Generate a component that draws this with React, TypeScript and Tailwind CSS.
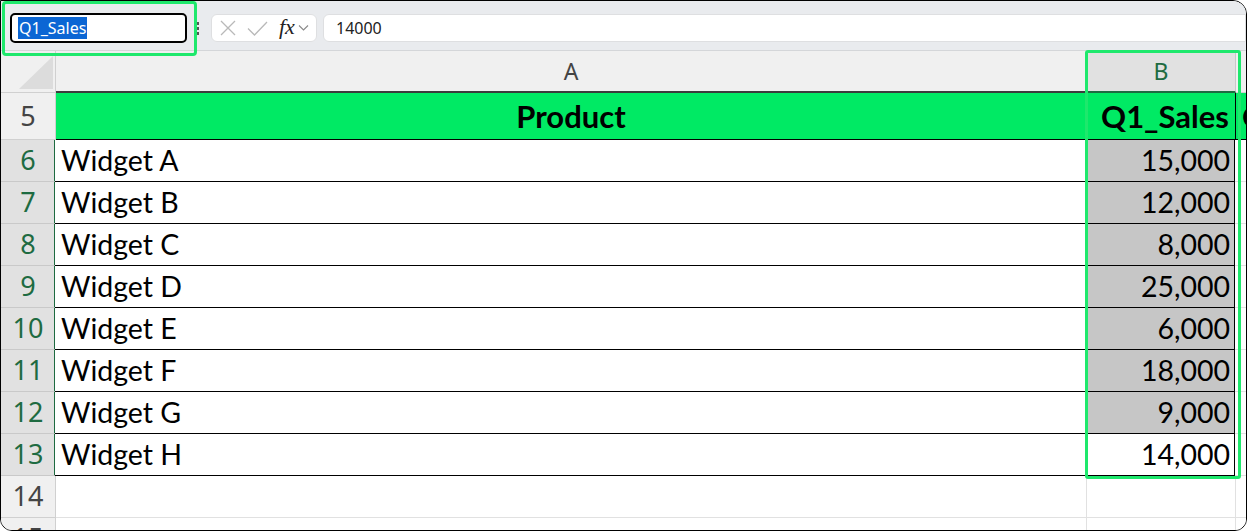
import React from "react";

const rows = [
  { n: 6, name: "Widget A", v: "15,000" },
  { n: 7, name: "Widget B", v: "12,000" },
  { n: 8, name: "Widget C", v: "8,000" },
  { n: 9, name: "Widget D", v: "25,000" },
  { n: 10, name: "Widget E", v: "6,000" },
  { n: 11, name: "Widget F", v: "18,000" },
  { n: 12, name: "Widget G", v: "9,000" },
  { n: 13, name: "Widget H", v: "14,000" },
];

const cellFont = "font-['Lato','Open_Sans',sans-serif]";
const uiFont = "font-['Noto_Sans','Open_Sans',sans-serif]";

export default function App() {
  return (
    <div className="w-[1247px] h-[531px] bg-white overflow-hidden">
      <div className="relative w-[1247px] h-[531px] overflow-hidden border border-black rounded-tr-[14px] rounded-b-[12px] bg-white">
        {/* Formula bar */}
        <div className={`h-[50px] bg-[#e9ebee] border-b border-[#d4d6d9] flex items-start pt-[12px] ${uiFont}`}>
          <div className="ml-[9px] w-[177px] h-[30px] rounded-[5px] border-2 border-black bg-white flex items-center pl-[6px]">
            <span className="bg-[#0b66d4] text-white text-[16px] leading-[22px] px-[1px]">Q1_Sales</span>
          </div>
          <div className="ml-[9px] mt-[9px] flex flex-col gap-[2px] w-[4px]">
            <span className="w-[3px] h-[3px] bg-[#555]" />
            <span className="w-[3px] h-[3px] bg-[#555]" />
            <span className="w-[3px] h-[3px] bg-[#555]" />
          </div>
          <div className="ml-[11px] mt-[1px] w-[106px] h-[28px] rounded-[6px] bg-white border border-[#dedfe1] flex items-center pl-[8px]">
            <svg width="16" height="16" viewBox="0 0 16 16" className="mr-[11px]">
              <path d="M1 1 L15 15 M15 1 L1 15" stroke="#b9b9b9" strokeWidth="1.3" fill="none" />
            </svg>
            <svg width="21" height="15" viewBox="0 0 21 15" className="mr-[11px]">
              <path d="M1 7.5 L7.5 14 L20 1" stroke="#b9b9b9" strokeWidth="1.3" fill="none" />
            </svg>
            <span className="font-['Liberation_Serif',serif] italic text-[22px] leading-none text-[#222] mr-[3px] -mt-[3px]">fx</span>
            <svg width="11" height="8" viewBox="0 0 11 8">
              <path d="M1 1.5 L5.5 6 L10 1.5" stroke="#8a8a8a" strokeWidth="1.1" fill="none" />
            </svg>
          </div>
          <div className="ml-[6px] mt-[1px] flex-1 h-[28px] rounded-l-[6px] bg-white border border-[#dedfe1] flex items-center pl-[12px] text-[16px] text-[#222]">
            14000
          </div>
        </div>

        {/* Column header */}
        <div className={`flex h-[42px] ${uiFont}`}>
          <div className="w-[55px] shrink-0 bg-[#f0f0f0] border-r border-[#d0d0d0] border-b border-[#d0d0d0] relative">
            <svg width="34" height="33" viewBox="0 0 34 33" className="absolute left-[18px] top-[5px]">
              <path d="M34 0 L34 33 L0 33 Z" fill="#dcdcdc" />
            </svg>
          </div>
          <div className="w-[1031px] shrink-0 bg-[#f0f0f0] border-r border-[#d0d0d0] border-b-2 border-b-[#3c3c3c] flex items-center justify-center text-[23px] text-[#444]">
            A
          </div>
          <div className="w-[149px] shrink-0 bg-[#e1e1e1] border-r border-[#c8c8c8] border-b-2 border-b-[#1e6b41] flex items-center justify-center text-[23px] text-[#1e6b41]">
            B
          </div>
          <div className="flex-1 bg-[#f0f0f0] border-b border-[#d0d0d0]" />
        </div>

        {/* Row 5 header row */}
        <div className="flex h-[47px]">
          <div className={`w-[55px] shrink-0 bg-[#f0f0f0] border-r border-[#d0d0d0] border-b border-[#d0d0d0] flex items-center justify-center text-[27px] text-[#444] ${uiFont}`}>
            5
          </div>
          <div className={`w-[1031px] shrink-0 bg-[#00ea64] border-r border-black border-b border-black flex items-center justify-center text-[31px] font-bold text-black ${cellFont}`}>
            Product
          </div>
          <div className={`w-[149px] shrink-0 bg-[#00ea64] border-r border-black border-b border-black flex items-center justify-end pr-[6px] text-[31px] font-bold text-black whitespace-nowrap ${cellFont}`}>
            Q1_Sales
          </div>
          <div className={`flex-1 overflow-hidden whitespace-nowrap bg-[#00ea64] border-b border-black flex items-center pl-[6px] text-[31px] font-bold text-black ${cellFont}`}>
            Q2
          </div>
        </div>

        {rows.map((r) => (
          <div key={r.n} className="flex h-[42px]">
            <div className={`w-[55px] shrink-0 bg-[#e1e1e1] border-r-2 border-r-[#1e6b41] border-b border-[#c9c9c9] flex items-center justify-center pl-[1px] text-[27px] text-[#1e6b41] ${uiFont}`}>
              {r.n}
            </div>
            <div className={`w-[1031px] shrink-0 -ml-[1px] bg-white border-r border-black border-b border-black flex items-center pl-[6px] text-[28.5px] text-black ${cellFont}`}>
              {r.name}
            </div>
            <div className={`w-[149px] shrink-0 ${r.n === 13 ? "bg-white" : "bg-[#c6c6c6]"} border-r border-black border-b border-black flex items-center justify-end pr-[4px] text-[28.5px] text-black ${cellFont}`}>
              {r.v}
            </div>
            <div className="flex-1 bg-white border-b border-[#e1e1e1]" />
          </div>
        ))}

        {[14, 15].map((n) => (
          <div key={n} className="flex h-[42px]">
            <div className={`w-[55px] shrink-0 bg-[#f0f0f0] border-r border-[#d0d0d0] border-b border-[#d0d0d0] flex items-center justify-center text-[27px] text-[#444] ${uiFont}`}>
              {n}
            </div>
            <div className="w-[1031px] shrink-0 bg-white border-r border-[#e1e1e1] border-b border-[#e1e1e1]" />
            <div className="w-[149px] shrink-0 bg-white border-r border-[#e1e1e1] border-b border-[#e1e1e1]" />
            <div className="flex-1 bg-white border-b border-[#e1e1e1]" />
          </div>
        ))}

        {/* Selection highlights */}
        <div className="absolute left-[1px] top-0 w-[195px] h-[55px] border-[3px] border-[#1ee86c] rounded-[4px] pointer-events-none" />
        <div className="absolute left-[1084px] top-[49px] w-[156px] h-[429px] border-[3px] border-[#1ee86c] rounded-[3px] pointer-events-none" />
      </div>
    </div>
  );
}
